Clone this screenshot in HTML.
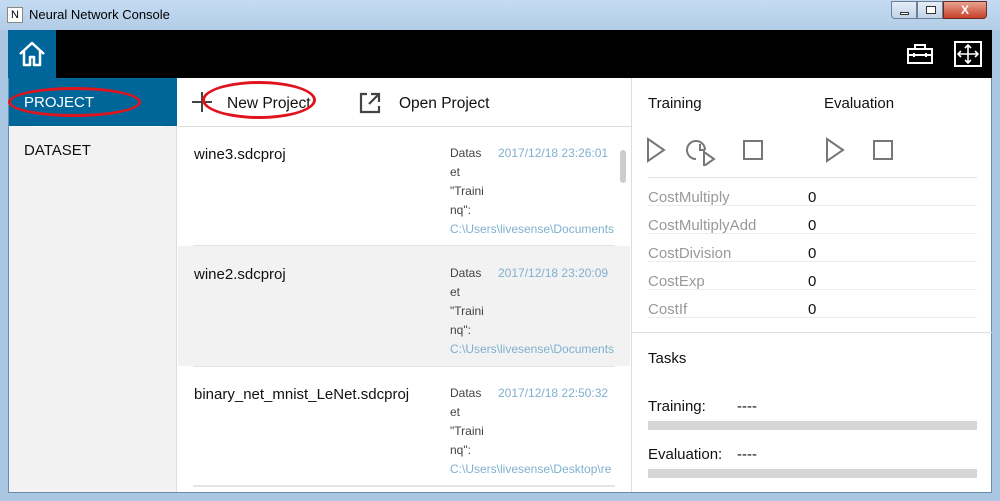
<!DOCTYPE html>
<html><head><meta charset="utf-8"><style>
*{margin:0;padding:0;box-sizing:border-box}
body{width:1000px;height:501px;overflow:hidden;font-family:"Liberation Sans","Noto Sans CJK JP",sans-serif;background:#a9c6e3;position:relative}
.abs{position:absolute}
.t{white-space:nowrap}
</style></head><body>
<div class="abs" style="left:0;top:0;width:1000px;height:30px;background:linear-gradient(#c4dbf2,#b3cde8)"></div>
<div class="abs" style="left:7px;top:7px;width:16px;height:16px;background:#fff;border:1px solid #888;font-size:11px;text-align:center;line-height:14px">N</div>
<div class="abs t" style="left:29px;top:7px;font-size:13px;color:#000">Neural Network Console</div>
<div class="abs" style="left:891px;top:1px;width:26px;height:18px;background:linear-gradient(#e6eef8,#c1d2e6);border:1px solid #6c7f96;border-radius:0 0 0 4px"><div class="abs" style="left:8px;top:10px;width:9px;height:3px;border:1px solid #333;background:#fff"></div></div>
<div class="abs" style="left:917px;top:1px;width:26px;height:18px;background:linear-gradient(#e6eef8,#c1d2e6);border:1px solid #6c7f96"><div class="abs" style="left:8px;top:4px;width:10px;height:8px;border:1px solid #333;background:#fff"></div></div>
<div class="abs" style="left:943px;top:1px;width:44px;height:18px;background:linear-gradient(#e8a290,#c7412b);border:1px solid #6b2b22;border-radius:0 0 4px 0;color:#fff;font-weight:bold;font-size:12px;text-align:center;line-height:16px">X</div>

<div class="abs" style="left:8px;top:30px;width:984px;height:463px;background:#fff;border:1px solid #6d8bab"></div>
<div class="abs" style="left:8px;top:30px;width:984px;height:48px;background:#000"></div>
<div class="abs" style="left:8px;top:30px;width:48px;height:48px;background:#006699"></div>
<svg class="abs" style="left:17px;top:40px" width="30" height="28" viewBox="0 0 30 28"><path d="M3 14 L15 3 L27 14 M7 11 V25 H13 V17 H17 V25 H23 V11" fill="none" stroke="#fff" stroke-width="2.5" stroke-linejoin="round"/></svg>
<svg class="abs" style="left:905px;top:42px" width="30" height="24" viewBox="0 0 30 24"><path d="M3 7 H27 V21 H3 Z M3 13 H27 M10 7 V3 H20 V7 M9 11 V15 M21 11 V15" fill="none" stroke="#fff" stroke-width="2"/></svg>
<svg class="abs" style="left:954px;top:41px" width="28" height="26" viewBox="0 0 28 26"><rect x="1" y="1" width="26" height="24" fill="none" stroke="#fff" stroke-width="2"/><path d="M4 13 H24 M14 4 V22 M7 10 L4 13 L7 16 M21 10 L24 13 L21 16 M11 7 L14 4 L17 7 M11 19 L14 22 L17 19" fill="none" stroke="#fff" stroke-width="1.6"/></svg>

<div class="abs" style="left:9px;top:78px;width:168px;height:414px;background:#f2f2f2;border-right:1px solid #ddd"></div>
<div class="abs" style="left:9px;top:78px;width:168px;height:48px;background:#006699"></div>
<div class="abs t" style="left:24px;top:94px;font-size:15px;color:#fff">PROJECT</div>
<div class="abs" style="left:8px;top:87px;width:133px;height:30px;border:3px solid #e0141e;border-radius:50%"></div>
<div class="abs" style="left:32px;top:126px;width:130px;height:1px;background:#fff"></div>
<div class="abs t" style="left:24px;top:142px;font-size:15px;color:#111">DATASET</div>

<svg class="abs" style="left:190px;top:90px" width="24" height="24"><path d="M12 2 V22 M2 12 H22" stroke="#444" stroke-width="2"/></svg>
<div class="abs t" style="left:227px;top:95px;font-size:15.5px;color:#111">New Project</div>
<div class="abs" style="left:202px;top:81px;width:114px;height:38px;border:3px solid #e0141e;border-radius:50%"></div>
<svg class="abs" style="left:357px;top:90px" width="26" height="26"><path d="M10 4 H4 V22 H22 V16 M14 4 H22 V12 M22 4 L12 14" fill="none" stroke="#444" stroke-width="2.2"/></svg>
<div class="abs t" style="left:399px;top:95px;font-size:15.5px;color:#111">Open Project</div>
<div class="abs" style="left:178px;top:126px;width:453px;height:1px;background:#ddd"></div>

<div class="abs" style="left:178px;top:246px;width:452px;height:120px;background:#f2f2f2"></div>
<div class="abs" style="left:193px;top:245px;width:422px;height:1px;background:#e4e4e4"></div>
<div class="abs" style="left:193px;top:366px;width:422px;height:1px;background:#e4e4e4"></div>
<div class="abs" style="left:193px;top:485px;width:422px;height:2px;background:#e4e4e4"></div>
<div class="abs" style="left:620px;top:150px;width:6px;height:33px;background:#ccc;border-radius:3px"></div>

<div class="abs t" style="left:194px;top:146px;font-size:15px;color:#111">wine3.sdcproj</div>
<div class="abs t" style="left:194px;top:266px;font-size:15px;color:#111">wine2.sdcproj</div>
<div class="abs t" style="left:194px;top:386px;font-size:15px;color:#111">binary_net_mnist_LeNet.sdcproj</div>

<div class="abs" style="left:450px;top:144px;font-size:12px;line-height:19px;color:#444;width:166px;overflow:hidden">Datas<br>et<br>"Traini<br>nq":<br><span style="color:#7fb0cf;white-space:nowrap">C:\Users\livesense\Documents</span></div>
<div class="abs t" style="left:498px;top:144px;font-size:12px;color:#7fb0cf;line-height:19px">2017/12/18 23:26:01</div>
<div class="abs" style="left:450px;top:264px;font-size:12px;line-height:19px;color:#444;width:166px;overflow:hidden">Datas<br>et<br>"Traini<br>nq":<br><span style="color:#7fb0cf;white-space:nowrap">C:\Users\livesense\Documents</span></div>
<div class="abs t" style="left:498px;top:264px;font-size:12px;color:#7fb0cf;line-height:19px">2017/12/18 23:20:09</div>
<div class="abs" style="left:450px;top:384px;font-size:12px;line-height:19px;color:#444;width:166px;overflow:hidden">Datas<br>et<br>"Traini<br>nq":<br><span style="color:#7fb0cf;white-space:nowrap">C:\Users\livesense\Desktop\re</span></div>
<div class="abs t" style="left:498px;top:384px;font-size:12px;color:#7fb0cf;line-height:19px">2017/12/18 22:50:32</div>

<div class="abs" style="left:631px;top:78px;width:1px;height:414px;background:#ddd"></div>
<div class="abs t" style="left:648px;top:95px;font-size:15px;color:#111">Training</div>
<div class="abs t" style="left:824px;top:95px;font-size:15px;color:#111">Evaluation</div>
<svg class="abs" style="left:645px;top:136px" width="260" height="30"><g fill="none" stroke="#777" stroke-width="2"><path d="M3 3 L19 14 L3 25 Z"/><path d="M60 14 A9 9 0 1 0 51 23 M55 8 V14 H60"/><path d="M59 16 L69 23 L59 30 Z"/><rect x="99" y="5" width="18" height="18"/><path d="M182 3 L198 14 L182 25 Z"/><rect x="229" y="5" width="18" height="18"/></g></svg>
<div class="abs" style="left:648px;top:177px;width:329px;height:1px;background:#e4e4e4"></div>
<div class="abs" style="left:648px;top:184px;font-size:15px;line-height:28px;color:#999">CostMultiply<br>CostMultiplyAdd<br>CostDivision<br>CostExp<br>CostIf</div>
<div class="abs" style="left:808px;top:184px;font-size:15px;line-height:28px;color:#111">0<br>0<br>0<br>0<br>0</div>
<div class="abs" style="left:648px;top:205px;width:329px;height:1px;background:#ececec"></div>
<div class="abs" style="left:648px;top:233px;width:329px;height:1px;background:#ececec"></div>
<div class="abs" style="left:648px;top:261px;width:329px;height:1px;background:#ececec"></div>
<div class="abs" style="left:648px;top:289px;width:329px;height:1px;background:#ececec"></div>
<div class="abs" style="left:648px;top:317px;width:329px;height:1px;background:#ececec"></div>
<div class="abs" style="left:632px;top:332px;width:360px;height:1px;background:#ddd"></div>
<div class="abs t" style="left:648px;top:350px;font-size:15px;color:#111">Tasks</div>
<div class="abs t" style="left:648px;top:398px;font-size:15px;color:#111">Training:</div>
<div class="abs t" style="left:737px;top:398px;font-size:15px;color:#111">----</div>
<div class="abs" style="left:648px;top:421px;width:329px;height:9px;background:#d6d6d6"></div>
<div class="abs t" style="left:648px;top:446px;font-size:15px;color:#111">Evaluation:</div>
<div class="abs t" style="left:737px;top:446px;font-size:15px;color:#111">----</div>
<div class="abs" style="left:648px;top:469px;width:329px;height:9px;background:#d6d6d6"></div>
</body></html>
